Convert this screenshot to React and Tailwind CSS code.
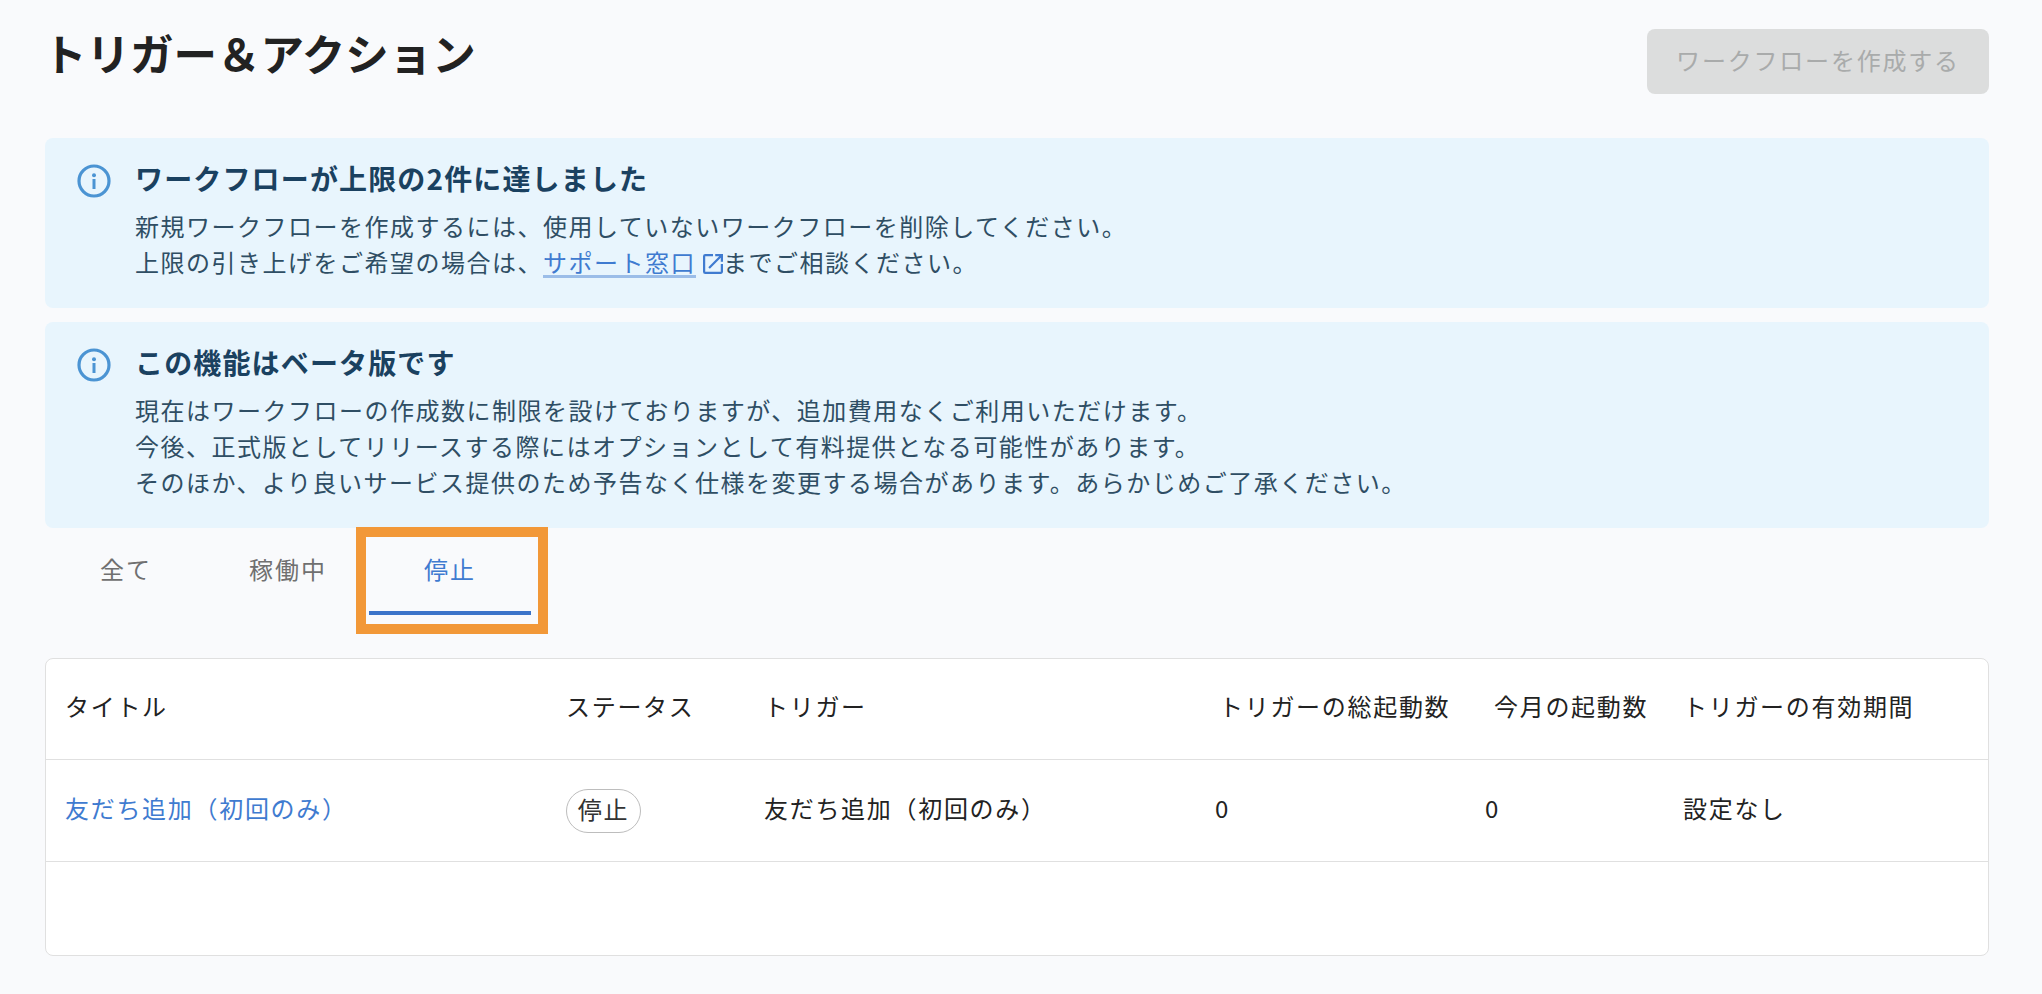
import React from 'react';

function InfoIcon() {
  return (
    <svg width="34" height="34" viewBox="0 0 34 34" fill="none" className="shrink-0 mt-[6px]">
      <circle cx="17" cy="17" r="15" stroke="#4b94d3" strokeWidth="3.2" />
      <circle cx="17" cy="11.2" r="2" fill="#4b94d3" />
      <rect x="15.5" y="15" width="3" height="10" fill="#4b94d3" />
    </svg>
  );
}

function OpenIcon() {
  return (
    <svg width="20" height="20" viewBox="3 3 18 18" fill="#3f7bd0" className="inline-block align-[-2px] ml-[7px]">
      <path d="M19 19H5V5h7V3H5a2 2 0 0 0-2 2v14a2 2 0 0 0 2 2h14c1.1 0 2-.9 2-2v-7h-2v7zM14 3v2h3.59l-9.83 9.83 1.41 1.41L19 6.41V10h2V3h-7z" />
    </svg>
  );
}

function Notice({ title, children }) {
  return (
    <div className="flex gap-[24px] bg-[#e8f5fd] rounded-lg pl-[32px] pr-6 pt-[20px] pb-[28px]">
      <InfoIcon />
      <div>
        <div className="text-[28px] leading-[40px] font-bold tracking-[1.15px] text-[#1a4160]">{title}</div>
        <div className="mt-[10px] text-[24px] leading-[36px] tracking-[1.5px] text-[#2f4e64]">{children}</div>
      </div>
    </div>
  );
}

function Tab({ label, active }) {
  return (
    <div className={`relative w-[162px] h-[87px] flex items-center justify-center pb-[1px] text-[24px] tracking-[2px] border-b-4 ${active ? 'text-[#3f7bd0] border-[#3b74c9]' : 'text-[#707070] border-transparent'}`}>
      {label}
      {active && <div className="absolute -left-[13px] -right-[17px] -top-[1px] -bottom-[23px] border-[10px] border-[#f29838] pointer-events-none"></div>}
    </div>
  );
}

const cols = "grid grid-cols-[500px_198px_451px_270px_198px_1fr] items-center";

export default function App() {
  return (
    <div className="font-['Noto_Sans_CJK_JP','Noto_Sans',sans-serif] min-h-[994px] bg-[#f9fafc] pl-[45px] pr-[53px] pt-[29px] text-[#222]">
      <div className="flex justify-between items-start">
        <h1 className="-ml-[2px] text-[43.5px] leading-[47px] font-bold text-[#222]">トリガー＆アクション</h1>
        <button className="w-[342px] h-[65px] pb-[3px] bg-[#dcdddd] rounded-lg text-[24px] tracking-[1.8px] text-[#a9abab]">ワークフローを作成する</button>
      </div>

      <div className="mt-[44px] flex flex-col gap-[14px]">
        <Notice title="ワークフローが上限の2件に達しました">
          <p>新規ワークフローを作成するには、使用していないワークフローを削除してください。</p>
          <p>上限の引き上げをご希望の場合は、<span className="text-[#3f7bd0] underline decoration-[#9bbde8] decoration-[3px] underline-offset-[3px]">サポート窓口</span><OpenIcon />までご相談ください。</p>
        </Notice>
        <Notice title="この機能はベータ版です">
          <p>現在はワークフローの作成数に制限を設けておりますが、追加費用なくご利用いただけます。</p>
          <p>今後、正式版としてリリースする際にはオプションとして有料提供となる可能性があります。</p>
          <p>そのほか、より良いサービス提供のため予告なく仕様を変更する場合があります。あらかじめご了承ください。</p>
        </Notice>
      </div>

      <div className="flex">
        <Tab label="全て" />
        <Tab label="稼働中" />
        <Tab label="停止" active />
      </div>

      <div className="mt-[43px] h-[298px] bg-white border border-[#e0e0e0] rounded-lg text-[24px] tracking-[1.7px]">
        <div className={`${cols} h-[101px] pb-[7px] border-b border-[#e0e0e0]`}>
          <div className="pl-[19px]">タイトル</div>
          <div className="pl-5">ステータス</div>
          <div className="pl-5">トリガー</div>
          <div className="pl-[24px]">トリガーの総起動数</div>
          <div className="pl-[29px]">今月の起動数</div>
          <div className="pl-5">トリガーの有効期間</div>
        </div>
        <div className={`${cols} h-[102px] border-b border-[#e0e0e0]`}>
          <div className="pl-[19px] pb-[5px] text-[#3f7bd0]">友だち追加（初回のみ）</div>
          <div className="pl-5">
            <span className="inline-flex items-center justify-center w-[75px] h-[44px] pb-[3px] rounded-full border border-[#bdbdbd] bg-white text-[#333]">停止</span>
          </div>
          <div className="pl-5 pb-[5px]">友だち追加（初回のみ）</div>
          <div className="pl-[20px] pb-[5px]">0</div>
          <div className="pl-5 pb-[5px]">0</div>
          <div className="pl-5 pb-[5px]">設定なし</div>
        </div>
      </div>
    </div>
  );
}
